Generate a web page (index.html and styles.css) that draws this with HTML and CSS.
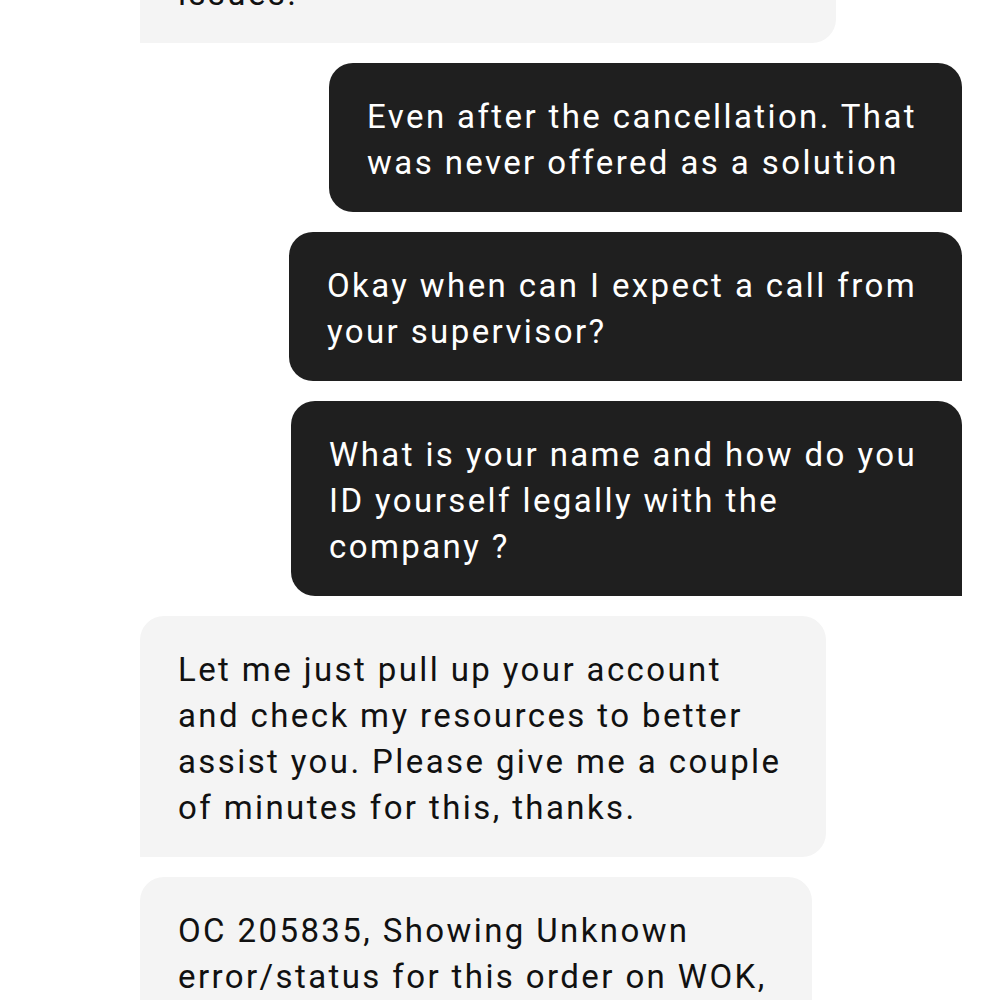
FILE: index.html
```html
<!DOCTYPE html>
<html lang="en">
<head>
<meta charset="utf-8">
<title>Chat</title>
<link rel="stylesheet" href="styles.css">
</head>
<body>
<main class="chat">
  <div class="msg in first">We apologize for any inconvenience these<br>issues.</div>
  <div class="msg out">Even after the cancellation. That<br>was never offered as a solution</div>
  <div class="msg out">Okay when can I expect a call from<br>your supervisor?</div>
  <div class="msg out">What is your name and how do you<br>ID yourself legally with the<br>company ?</div>
  <div class="msg in">Let me just pull up your account<br>and check my resources to better<br>assist you. Please give me a couple<br>of minutes for this, thanks.</div>
  <div class="msg in">OC 205835, Showing Unknown<br>error/status for this order on WOK,<br>please hold on.</div>
</main>
</body>
</html>
```
FILE: styles.css
```css
html, body {
  margin: 0;
  padding: 0;
  background: #ffffff;
  height: 1000px;
  overflow: hidden;
}
.chat {
  display: flex;
  flex-direction: column;
  gap: 20px;
  padding: 0 38px 0 140px;
  margin-top: -106px;
  font-family: Roboto, "Liberation Sans", sans-serif;
  font-size: 33px;
  letter-spacing: 2.4px;
  line-height: 46px;
}
.msg {
  width: fit-content;
  padding: 31px 45px 26px 38px;
  border-radius: 24px;
}
.msg.in {
  align-self: flex-start;
  background: #f4f4f4;
  color: #111111;
  border-bottom-left-radius: 0;
}
.msg.out {
  align-self: flex-end;
  background: #1f1f1f;
  color: #ffffff;
  border-bottom-right-radius: 0;
}
.msg.first {
  width: 696px;
  box-sizing: border-box;
  white-space: nowrap;
  overflow: hidden;
}
```
